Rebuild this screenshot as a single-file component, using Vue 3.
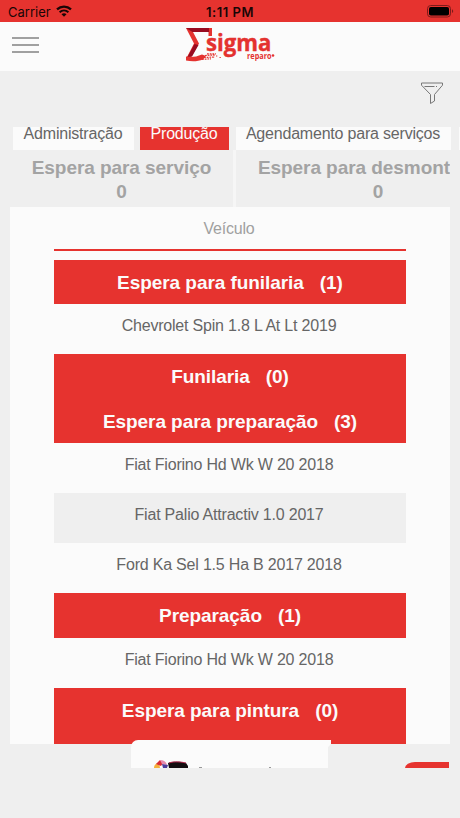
<template>
  <div class="app-screen">
    <!-- Barra de status -->
    <div class="status-bar">
      <div class="carrier">
        <span class="carrier-name">Carrier</span>
        <svg class="wifi" viewBox="0 0 16 12" width="16" height="12">
          <path d="M1 4.400C5 .6 11 .6 15 4.400" fill="none" stroke="#190606" stroke-width="2.300" />
          <path d="M3.600 7.200c2.600-2.400 6.200-2.400 8.800 0" fill="none" stroke="#190606" stroke-width="2" />
          <path d="M8 11.800L5.500 9.300c1.500-1.300 3.500-1.300 5 0z" fill="#190606" />
        </svg>
      </div>
      <span class="clock">1:11 PM</span>
      <svg class="battery" viewBox="0 0 27 13" width="27" height="13">
        <rect x=".5" y=".5" width="23" height="11.500" rx="3.200" fill="none" stroke="#7d1b1a" />
        <rect x="2" y="2" width="20" height="8.500" rx="1.800" fill="#000" />
        <path d="M25 4.300c1.600.6 1.600 3.200 0 3.800z" fill="#7d1b1a" />
      </svg>
    </div>

    <!-- Cabeçalho -->
    <header class="header">
      <button class="menu-btn" aria-label="Menu">
        <span></span>
        <span></span>
        <span></span>
      </button>
      <svg class="logo" viewBox="0 0 92 38" width="92" height="38">
        <path d="M1 1h26v8h-3.500V5H8l6 11.500L6.500 29.500 1 32l8-15.500z" fill="#e4322f" />
        <path d="M1 1h23v4H7.500z" fill="#980b20" />
        <path d="M9.500 17l4 1L7 29.500l-4.500.5z" fill="#980b20" />
        <path d="M1 29.500c5 1 10 .5 16-2l4 1.500-3 3.500c-5 2-11 2.300-17 1z" fill="#e4322f" />
        <path d="M20 28.500l10-.500M19 30.500l11-.500M17 32.300l9-.500M22 26.800h9" fill="none" stroke="#e4322f" stroke-width="1.200" stroke-dasharray="1.800 .9" />
        <path d="M31 29h1.300M34.500 30.500h1.300" stroke="#e4322f" stroke-width="1.200" />
        <text x="21" y="23.700" class="logo-name" textLength="65.500" lengthAdjust="spacingAndGlyphs">sigma</text>
        <text x="62" y="32" class="logo-sub" textLength="24.500" lengthAdjust="spacingAndGlyphs">reparo</text>
        <circle cx="88" cy="28.500" r="1.300" fill="#e4322f" />
      </svg>
    </header>

    <!-- Filtro -->
    <div class="toolbar">
      <svg class="filter" viewBox="0 0 24 23" width="24" height="23">
        <path d="M1.500 1h21v2.200L14.500 12.500v6.500L10.500 21.500v-9L1.500 3.200z" fill="none" stroke="#777" stroke-linejoin="round" />
        <path d="M4.500 4.500h10M16 4.500h1" fill="none" stroke="#777" />
      </svg>
    </div>

    <!-- Abas -->
    <nav class="tabs">
      <button
        v-for="tab in tabs"
        :key="tab.id"
        class="tab"
        :class="[tab.id, { active: activeTab === tab.id }]"
        @click="activeTab = tab.id"
      >
        {{ tab.label }}
      </button>
    </nav>

    <!-- Etapas -->
    <div class="stages">
      <div v-for="stage in stages" :key="stage.name" class="stage">
        <div class="stage-name">{{ stage.name }}</div>
        <div>{{ stage.total }}</div>
      </div>
    </div>

    <!-- Lista de veículos -->
    <main class="panel">
      <div class="table">
        <div class="table-head">Veículo</div>
        <section v-for="group in groups" :key="group.name" class="group">
          <h2 class="group-title">{{ group.name }}<span>({{ group.vehicles.length }})</span></h2>
          <div v-for="vehicle in group.vehicles" :key="vehicle" class="vehicle">{{ vehicle }}</div>
        </section>
      </div>
    </main>

    <div class="bottom">
      <div class="card">
        <svg class="card-icon" viewBox="0 0 36 8" width="36" height="8">
          <path d="M0 8c0-3 2-5 5-5l1 5z" fill="#f5b13d" />
          <path d="M2 4l4-4 3 3-2 3z" fill="#d92c36" />
          <path d="M6 0c4 0 6 2 7 5L8 4z" fill="#e68aad" />
          <path d="M8 4l6 1-1 3H9z" fill="#4c3c9c" />
          <path d="M14 3c6-2 14-1 18 0l2 3v2H15z" fill="#130d10" />
          <path d="M15 3c5-2 13-1 17 0" fill="none" stroke="#b82b50" />
        </svg>
        <i class="mark"></i>
        <i class="mark far"></i>
      </div>
      <button class="float-btn" aria-label="Adicionar"></button>
    </div>
  </div>
</template>

<script setup>
import { ref } from 'vue';

// Aba selecionada
const activeTab = ref('producao');

const tabs = [
  { id: 'administracao', label: 'Administração' },
  { id: 'producao', label: 'Produção' },
  { id: 'agendamento', label: 'Agendamento para serviços' },
  { id: 'proxima', label: '' },
];

const stages = [
  { name: 'Espera para serviço', total: 0 },
  { name: 'Espera para desmont', total: 0 },
];

const groups = [
  { name: 'Espera para funilaria', vehicles: ['Chevrolet Spin 1.8 L At Lt 2019'] },
  { name: 'Funilaria', vehicles: [] },
  {
    name: 'Espera para preparação',
    vehicles: ['Fiat Fiorino Hd Wk W 20 2018', 'Fiat Palio Attractiv 1.0 2017', 'Ford Ka Sel 1.5 Ha B 2017 2018'],
  },
  { name: 'Preparação', vehicles: ['Fiat Fiorino Hd Wk W 20 2018'] },
  { name: 'Espera para pintura', vehicles: [] },
];
</script>

<style>
body {
  background-color: #efefef;
}
</style>

<style scoped>
.app-screen {
  width: 460px;
  height: 818px;
  overflow: hidden;
  background-color: #efefef;
  color: #666;
  font-family: "Liberation Sans", Arial, sans-serif;
  font-size: 16px;
  letter-spacing: -0.2px;
}

button {
  border: none;
  padding: 0;
  font: inherit;
  letter-spacing: inherit;
  cursor: pointer;
}

/* Barra de status */
.status-bar {
  display: grid;
  grid-template-columns: 1fr auto 1fr;
  align-items: center;
  box-sizing: border-box;
  height: 22px;
  padding: 2px 6px 0 8px;
  background-color: #e6332f;
  color: #190606;
  font-family: Inter, sans-serif;
  font-size: 13px;
  letter-spacing: 0;
}

.carrier {
  display: flex;
  align-items: center;
  gap: 5px;
}

.wifi {
  margin-top: -2px;
}

.clock {
  padding-right: 2px;
  font-weight: 600;
  letter-spacing: 0.5px;
}

.battery {
  justify-self: end;
  margin-top: -1px;
}

/* Cabeçalho */
.header {
  display: flex;
  align-items: flex-start;
  box-sizing: border-box;
  height: 49px;
  padding: 5px 12px 0;
  background-color: #fbfbfb;
}

.menu-btn {
  display: flex;
  flex-direction: column;
  gap: 5px;
  width: 27px;
  margin-top: 10px;
  background: none;
}

.menu-btn span {
  height: 2px;
  background-color: #a0a0a0;
}

.logo {
  margin-left: 146px;
  letter-spacing: 0;
}

.logo-name {
  fill: #e4322f;
  stroke: #e4322f;
  stroke-width: 0.4px;
  font-family: "Open Sans", sans-serif;
  font-size: 24px;
  font-weight: 700;
}

.logo-sub {
  fill: #e4322f;
  font-family: "Open Sans", sans-serif;
  font-size: 8px;
  font-weight: 700;
}

/* Filtro */
.toolbar {
  display: flex;
  justify-content: flex-end;
  box-sizing: border-box;
  height: 56px;
  padding: 11px 16px 0;
}

/* Abas */
.tabs {
  display: flex;
  gap: 6px;
  height: 23px;
  padding-left: 13px;
  overflow: hidden;
}

.tab {
  flex: none;
  width: 121px;
  height: 33px;
  margin-top: -10px;
  padding-right: 1px;
  background-color: #fbfbfb;
  color: #666;
  line-height: 33px;
}

.tab.active {
  background-color: #e6332f;
  color: #fbfbfb;
}

.tab.producao {
  width: 89px;
}

.tab.agendamento {
  width: 215px;
  margin-left: 1px;
}

.tab.proxima {
  margin-left: 2px;
}

/* Etapas */
.stages {
  display: flex;
  gap: 3px;
  height: 57px;
  margin: 0 10px;
  overflow: hidden;
  background: linear-gradient(90deg, #efefef 223px, #f6f6f6 223px, #f6f6f6 226px, #efefef 226px);
  color: #a3a3a3;
  font-size: 19px;
  font-weight: bold;
  letter-spacing: -0.06px;
  line-height: 23px;
  text-align: center;
}

.stage {
  flex: none;
  box-sizing: border-box;
  width: 223px;
  padding-top: 6px;
}

.stage-name {
  margin-bottom: 1px;
}

.stage + .stage {
  width: 284px;
}

.stage + .stage .stage-name {
  width: 214px;
  overflow: hidden;
  text-align: right;
  white-space: nowrap;
}

/* Lista de veículos */
.panel {
  box-sizing: border-box;
  height: 537px;
  margin: 0 10px;
  padding: 0 44px;
  overflow: hidden;
  background-color: #fbfbfb;
}

.table {
  text-align: center;
}

.table-head {
  height: 42px;
  margin-bottom: 9px;
  padding-right: 2px;
  border-bottom: 2px solid #e6332f;
  color: #a0a0a0;
  line-height: 43px;
}

.group-title {
  height: 44.400px;
  margin: 0;
  background-color: #e6332f;
  color: #fbfbfb;
  font-size: 19px;
  letter-spacing: -0.060px;
  line-height: 45px;
}

.group-title span {
  margin-left: 16px;
}

.group:last-child .group-title {
  height: 57px;
}

.vehicle {
  box-sizing: border-box;
  height: 50px;
  padding-right: 2px;
  line-height: 43px;
}

.vehicle:nth-child(odd) {
  background-color: #efefef;
}

/* Rodapé */
.bottom {
  position: relative;
  display: flex;
  justify-content: space-between;
  align-items: flex-end;
  height: 28px;
  margin: -4px 11px 0 131px;
  overflow: hidden;
}

.card {
  display: flex;
  align-items: flex-end;
  width: 200px;
  height: 28px;
  border-top-left-radius: 7px;
  background-color: #fbfbfb;
  clip-path: polygon(0 0, 100% 0, 100% 4px, 197px 7px, 197px 100%, 0 100%);
}

.card-icon {
  margin-left: 23px;
}

.mark {
  width: 3px;
  height: 1px;
  margin-left: 9px;
  background-color: #999;
}

.mark.far {
  width: 2px;
  margin-left: 67px;
}

.float-btn {
  width: 44px;
  height: 6px;
  border-radius: 10px 0 0 0 / 6px 0 0 0;
  background-color: #e6332f;
}
</style>
